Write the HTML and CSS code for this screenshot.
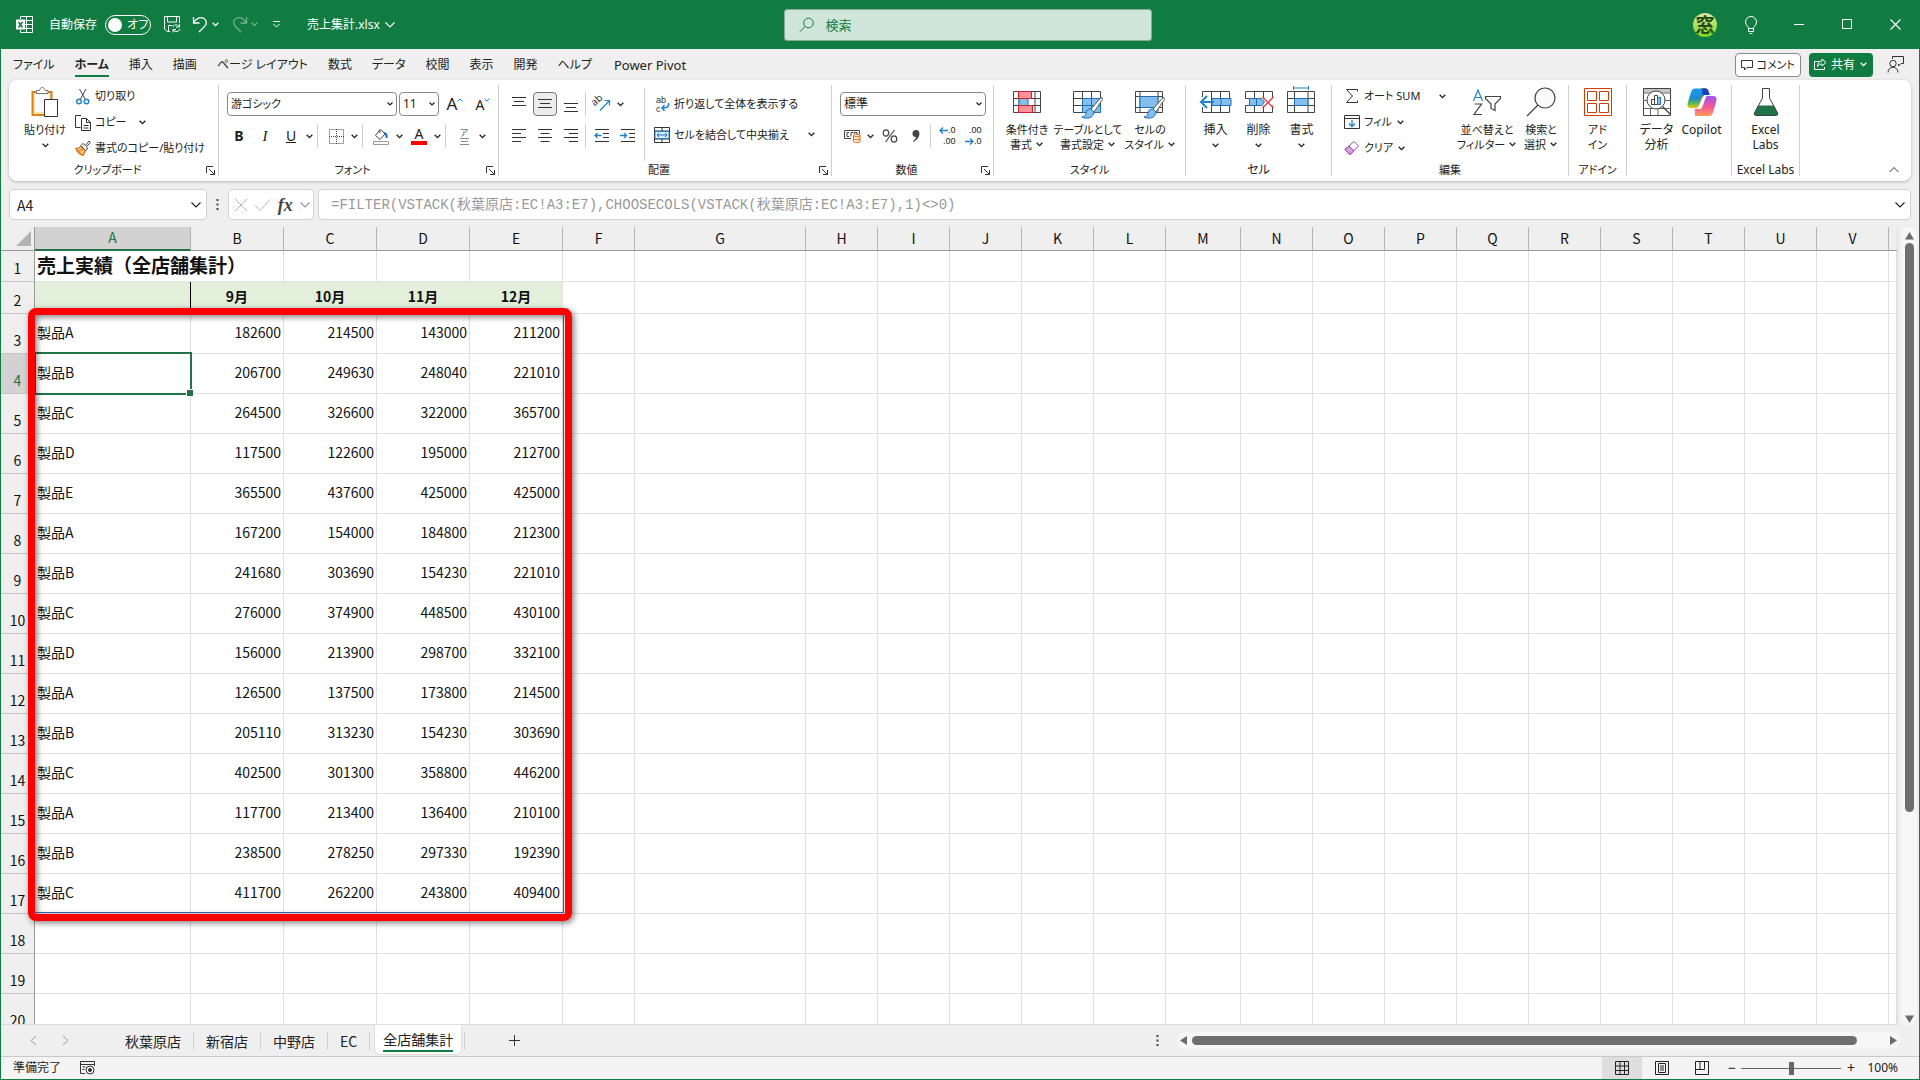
FILE: index.html
```html
<!DOCTYPE html>
<html lang="ja">

<head>
    <meta charset="UTF-8">
    <meta name="viewport" content="width=device-width, initial-scale=1">
    <title>売上集計.xlsx</title>
    <link rel="stylesheet" href="styles.css">
</head>

<body>

    <!-- shared icons -->
    <svg class="defs" width="0" height="0" aria-hidden="true">
        <symbol id="chev" viewBox="0 0 8 8">
            <path d="M1.5 2.5 4 5l2.500-2.500" fill="none" stroke="currentColor" stroke-width="1.200" />
        </symbol>
        <symbol id="chevBig" viewBox="0 0 12 12">
            <path d="M1.500 3.500 6 8l4.500-4.500" fill="none" stroke="currentColor" stroke-width="1.200" />
        </symbol>
        <symbol id="launch" viewBox="0 0 9 9">
            <path d="M.5 7V.5H7M3 3l5 5M8.500 4v4.500H4" fill="none" stroke="#333" />
        </symbol>
        <symbol id="brush" viewBox="0 0 24 24">
            <path d="M22.500 1 12 13l3 3L23.500 3.500z" fill="#fff" stroke="#555" />
            <path d="M12 13c-3-.5-4.500 1-5 4-.4 2.500-1.500 3.500-4 4 5 2.500 11.500 1 12-5z" fill="#83beec" stroke="#1e6fb8" />
        </symbol>
    </svg>

    <header class="titlebar">
        <div class="title-left">
            <svg class="xl" width="17" height="17" viewBox="0 0 17 17">
                <path d="M4.500 3V.5h12v16h-12V14M10.500.5v16M4.500 4.500h12M8 8.500h8.500M4.500 12.500h12" fill="none" stroke="#fff" />
                <rect y="3.500" width="9" height="10" fill="#fff" />
                <path d="m2.500 6 4 5.500M6.500 6l-4 5.500" stroke="#107c41" stroke-width="1.500" />
            </svg>
            <label class="autosave">自動保存
                <input type="checkbox">
                <span class="switch"><span class="knob"></span>オフ</span>
            </label>
            <button class="tb" aria-label="上書き保存">
                <svg width="17" height="17" viewBox="0 0 17 17" fill="none" stroke="#fff">
                    <path d="M6 15.500H3L.5 13V.5h15V7M3.500.5V6h9V.5M4.500 15.500V9.500H8" />
                    <path d="M8.500 11c1-2.500 5-3 6.500-.5M15.500 8v3H12M16 13c-1 3-5 3.500-6.500 1M9 16.500V13.500h3" />
                </svg>
            </button>
            <button class="tb split" aria-label="元に戻す">
                <svg width="17" height="17" viewBox="0 0 17 17" fill="none" stroke="#fff" stroke-width="1.300">
                    <path d="M1.500 1v6h6M1.500 7C4 2 9 .5 12 2.500c3 2 3 5.500.5 8L7 16" />
                </svg>
                <svg width="9" height="9"><use href="#chev" /></svg>
            </button>
            <button class="tb split off" aria-label="やり直し">
                <svg width="17" height="17" viewBox="0 0 17 17" fill="none" stroke="#fff" stroke-width="1.300">
                    <path d="M15.500 1v6h-6M15.500 7C13 2 8 .5 5 2.500c-3 2-3 5.500-.5 8L10 16" />
                </svg>
                <svg width="9" height="9"><use href="#chev" /></svg>
            </button>
            <button class="tb qat" aria-label="クイック アクセス ツール バー">
                <svg width="9" height="9" viewBox="0 0 9 9" fill="none" stroke="#fff">
                    <path d="M1 1.500h7M1.500 4l3 3 3-3" />
                </svg>
            </button>
            <button class="tb file">売上集計.xlsx
                <svg width="12" height="12"><use href="#chevBig" /></svg>
            </button>
        </div>
        <label class="search">
            <svg width="16" height="16" viewBox="0 0 16 16" fill="none" stroke="#107c41">
                <circle cx="9.500" cy="6" r="4.800" />
                <path d="M6 9.500.8 14.800" />
            </svg>
            <input type="text" placeholder="検索" aria-label="検索">
        </label>
        <div class="title-right">
            <button class="avatar" aria-label="アカウント"><span>窓</span></button>
            <button class="win" aria-label="ヒント">
                <svg width="14" height="18" viewBox="0 0 14 18" fill="none" stroke="#fff">
                    <path d="M4.500 12.500C4.500 10 1.500 9.500 1.500 6a5.500 5.500 0 0 1 11 0c0 3.500-3 4-3 6.500zM4.500 12.500v3h5v-3M5.500 17.500h3" />
                </svg>
            </button>
            <button class="win" aria-label="最小化">
                <svg width="11" height="11"><path d="M0 5.500h10" stroke="#fff" /></svg>
            </button>
            <button class="win" aria-label="最大化">
                <svg width="11" height="11"><path d="M.5.5h9v9h-9z" fill="none" stroke="#fff" /></svg>
            </button>
            <button class="win" aria-label="閉じる">
                <svg width="11" height="11"><path d="m.5.5 10 10m0-10-10 10" stroke="#fff" stroke-width="1.200" /></svg>
            </button>
        </div>
    </header>

    <div class="window">

        <nav class="tabs">
            <a href="#">ファイル</a>
            <a href="#" class="current">ホーム</a>
            <a href="#">挿入</a>
            <a href="#">描画</a>
            <a href="#">ページ レイアウト</a>
            <a href="#">数式</a>
            <a href="#">データ</a>
            <a href="#">校閲</a>
            <a href="#">表示</a>
            <a href="#">開発</a>
            <a href="#">ヘルプ</a>
            <a href="#">Power Pivot</a>
            <div class="tabs-right">
                <button class="comment">
                    <svg width="12" height="12" viewBox="0 0 12 12" fill="none" stroke="#333"><path d="M.5 1.500h11v7H6l-2.500 2.500V8.500h-3z" /></svg>
                    コメント
                </button>
                <button class="share">
                    <svg width="13" height="13" viewBox="0 0 13 13" fill="none" stroke="#fff"><path d="M5 3.500H.5v8h10V9M8 1l4 3.500L8 8V6C5.500 6 4.500 7 3.500 8.500 3.500 5.500 5 3 8 3z" /></svg>
                    共有
                    <svg width="9" height="9"><use href="#chev" /></svg>
                </button>
                <button class="person" aria-label="プレゼンス">
                    <svg width="18" height="17" viewBox="0 0 18 17" fill="none" stroke="#333">
                        <path d="M5.500 3V.5h11v7H14L11.500 10V8M1 16.500c0-7 10-7 10 0" />
                        <circle cx="6" cy="7.500" r="3.200" />
                    </svg>
                </button>
            </div>
        </nav>

        <section class="ribbon">

            <div class="group g-clip">
                <div class="group-body">
                    <button class="big paste">
                        <svg width="28" height="31" viewBox="0 0 28 31" fill="none">
                            <path d="M1.500 5h19v23h-19z" fill="#fbe3a8" stroke="#d97f1b" stroke-width="2" />
                            <path d="M4 7h14v18H4z" fill="#fafafa" />
                            <path d="M5.500 6.500v-3h3C9-.5 13.500-.5 14 3.500h3v3z" fill="#fff" stroke="#777" />
                            <path d="M13.500 12.500h13v17h-13z" fill="#fff" stroke="#333" />
                        </svg>
                        <span>貼り付け</span>
                        <svg width="9" height="9"><use href="#chev" /></svg>
                    </button>
                    <div class="stack">
                        <button class="small">
                            <svg width="16" height="17" viewBox="0 0 16 17" fill="none" stroke="#444">
                                <path d="M4.500 1 10 11M11 1 5.500 11" />
                                <circle cx="4" cy="13.500" r="2.300" stroke="#1e83cb" stroke-width="1.400" />
                                <circle cx="11.500" cy="13.500" r="2.300" stroke="#1e83cb" stroke-width="1.400" />
                            </svg>切り取り
                        </button>
                        <button class="small wide">
                            <svg width="16" height="17" viewBox="0 0 16 17" fill="none" stroke="#333">
                                <path d="M5.500 13.500h-5V1.500H6" />
                                <path d="M6.500 4.500h5l4 4v8h-9zM11.500 4.500v4h4M8.500 11.500h5M8.500 14h5" />
                            </svg>コピー
                            <svg class="end" width="9" height="9"><use href="#chev" /></svg>
                        </button>
                        <button class="small">
                            <svg width="16" height="16" viewBox="0 0 16 16" fill="none">
                                <path d="M1 8.500c2 0 4-1 5-2.500l4.500 4.500C9.500 12.500 8.500 14 8 15.500 4.500 14 2 12 1 8.500z" fill="#f9c07a" stroke="#dd6b10" stroke-width="1.300" />
                                <path d="M3 11.500 8 9" stroke="#dd6b10" />
                                <path d="m6 5.500 2-2 2.500 2L14 1l1.500 1.500L11.500 6.500l1 2.500-2 1.500z" fill="#fff" stroke="#444" />
                            </svg>書式のコピー/貼り付け
                        </button>
                    </div>
                </div>
                <div class="group-name"><span>クリップボード</span><button aria-label="詳細"><svg width="9" height="9"><use href="#launch" /></svg></button></div>
            </div>

            <div class="group g-font">
                <div class="group-body rows">
                    <div class="row">
                        <select class="font-name" aria-label="フォント"><option>游ゴシック</option></select>
                        <select class="font-size" aria-label="フォント サイズ"><option>11</option></select>
                        <button class="tool grow" aria-label="拡大"><span>A</span><svg width="6" height="4"><path d="m.5 3.500 2.500-2.500 2.500 2.500" fill="none" stroke="#1e83cb" /></svg></button>
                        <button class="tool shrink" aria-label="縮小"><span>A</span><svg width="6" height="4"><path d="m.5.5 2.500 2.500L5.500.5" fill="none" stroke="#1e83cb" /></svg></button>
                    </div>
                    <div class="row">
                        <button class="tool bold">B</button>
                        <button class="tool italic">I</button>
                        <span class="pair"><button class="tool under">U</button><button class="drop" aria-label="下線"><svg width="9" height="9"><use href="#chev" /></svg></button></span>
                        <i class="sep"></i>
                        <span class="pair"><button class="tool" aria-label="罫線">
                            <svg width="17" height="17" viewBox="0 0 17 17" fill="none" stroke="#444">
                                <path d="M1.500 1.500h14v14h-14zM8.500 1v15M1 8.500h15" stroke-dasharray="1 1" />
                            </svg></button><button class="drop" aria-label="罫線の種類"><svg width="9" height="9"><use href="#chev" /></svg></button></span>
                        <i class="sep"></i>
                        <span class="pair"><button class="tool" aria-label="塗りつぶし">
                            <svg width="16" height="17" viewBox="0 0 16 17" fill="none">
                                <path d="M7 1.500 2.500 7.500 7 11.500l5-5.500-4-4.500M7 1.500V5" stroke="#444" />
                                <path d="M11 5c2 .5 3 2 2.500 5" stroke="#1e6fb8" stroke-width="2" />
                                <path d="M.5 13.500h15v3H.5z" fill="#fff" stroke="#999" />
                            </svg></button><button class="drop" aria-label="塗りつぶしの色"><svg width="9" height="9"><use href="#chev" /></svg></button></span>
                        <span class="pair"><button class="tool color"><span>A</span></button><button class="drop" aria-label="フォントの色"><svg width="9" height="9"><use href="#chev" /></svg></button></span>
                        <i class="sep"></i>
                        <span class="pair"><button class="tool ruby"><span>ア</span><svg width="9" height="7"><path d="M0 .5h9M1 3.500h7M0 6.500h9" stroke="#888" /></svg></button><button class="drop" aria-label="ふりがな"><svg width="9" height="9"><use href="#chev" /></svg></button></span>
                    </div>
                </div>
                <div class="group-name"><span>フォント</span><button aria-label="詳細"><svg width="9" height="9"><use href="#launch" /></svg></button></div>
            </div>

            <div class="group g-align">
                <div class="group-body">
                    <div class="rows">
                        <div class="row">
                            <button class="tool" aria-label="上揃え"><svg width="16" height="16"><path d="M1 1.500h14M3 5.500h10M1 9.500h14" stroke="#333" /></svg></button>
                            <button class="tool on" aria-label="上下中央揃え"><svg width="16" height="16"><path d="M1 3.500h14M3 7.500h10M1 11.500h14" stroke="#333" /></svg></button>
                            <button class="tool" aria-label="下揃え"><svg width="16" height="16"><path d="M1 7.500h14M3 11.500h10M1 15.500h14" stroke="#333" /></svg></button>
                            <i class="sep"></i>
                            <span class="pair"><button class="tool" aria-label="方向">
                                <svg width="18" height="18" viewBox="0 0 18 18">
                                    <text x="1" y="8" font-size="10" fill="#333" transform="rotate(-42 6 9)">ab</text>
                                    <path d="M7 15.500 16 6M11.500 5.500h5v5" fill="none" stroke="#1e83cb" stroke-width="1.200" />
                                </svg></button><button class="drop" aria-label="方向の種類"><svg width="9" height="9"><use href="#chev" /></svg></button></span>
                        </div>
                        <div class="row">
                            <button class="tool" aria-label="左揃え"><svg width="16" height="16"><path d="M1 1.500h14M1 5.500h9M1 9.500h14M1 13.500h9" stroke="#333" /></svg></button>
                            <button class="tool" aria-label="中央揃え"><svg width="16" height="16"><path d="M1 1.500h14M3.500 5.500h9M1 9.500h14M3.500 13.500h9" stroke="#333" /></svg></button>
                            <button class="tool" aria-label="右揃え"><svg width="16" height="16"><path d="M1 1.500h14M6 5.500h9M1 9.500h14M6 13.500h9" stroke="#333" /></svg></button>
                            <i class="sep"></i>
                            <button class="tool" aria-label="インデントを減らす"><svg width="16" height="16" fill="none"><path d="M1 1.500h14M9 5.500h6M9 9.500h6M1 13.500h14" stroke="#333" /><path d="M7.500 7.500H1M3.500 5 1 7.500 3.500 10" stroke="#1e83cb" stroke-width="1.300" /></svg></button>
                            <button class="tool" aria-label="インデントを増やす"><svg width="16" height="16" fill="none"><path d="M1 1.500h14M9 5.500h6M9 9.500h6M1 13.500h14" stroke="#333" /><path d="M0 7.500h6.500M4 5l2.500 2.500L4 10" stroke="#1e83cb" stroke-width="1.300" /></svg></button>
                        </div>
                    </div>
                    <div class="rows wraps">
                        <button class="small">
                            <svg class="abc" width="16" height="16" viewBox="0 0 16 16">
                                <text x="2" y="7">ab</text>
                                <text x="2" y="16">c</text>
                                <path d="M14.500 7c1 4-2 5-6.500 5M10.500 9 8 12l2.500 3" fill="none" stroke="#1e83cb" stroke-width="1.500" />
                            </svg>折り返して全体を表示する
                        </button>
                        <button class="small wide">
                            <svg width="16" height="16" viewBox="0 0 16 16" fill="none">
                                <path d="M.5.500h15v15H.500zM.5 4h15M.5 12h15M8 .500V4M8 12v3.500" stroke="#333" />
                                <path d="M1 4.500h14v7H1z" fill="#dcecf9" stroke="#1e83cb" />
                                <path d="M3 8h10M5 6 3 8l2 2M11 6l2 2-2 2" stroke="#1e6fb8" />
                            </svg>セルを結合して中央揃え
                            <svg class="end" width="9" height="9"><use href="#chev" /></svg>
                        </button>
                    </div>
                </div>
                <div class="group-name"><span>配置</span><button aria-label="詳細"><svg width="9" height="9"><use href="#launch" /></svg></button></div>
            </div>

            <div class="group g-num">
                <div class="group-body rows">
                    <div class="row">
                        <select class="num-format" aria-label="表示形式"><option>標準</option></select>
                    </div>
                    <div class="row">
                        <span class="pair"><button class="tool" aria-label="通貨">
                            <svg width="17" height="15" viewBox="0 0 17 15" fill="none">
                                <path d="M7 9.500H.5v-8h15V5M5 3.500H3v4h2M9 3.500H7v4M10 5V3.500h3V5" stroke="#444" />
                                <path d="M9.500 6.500c0-1.500 6.500-1.500 6.500 0v6c0 1.500-6.500 1.500-6.500 0zM9.500 6.500c0 1.500 6.500 1.500 6.500 0M9.500 9.500c0 1.500 6.500 1.500 6.500 0" fill="#fde3cc" stroke="#dd6b10" />
                            </svg></button><button class="drop" aria-label="通貨の種類"><svg width="9" height="9"><use href="#chev" /></svg></button></span>
                        <button class="tool" aria-label="パーセント"><svg width="16" height="14" viewBox="0 0 16 14" fill="none" stroke="#444" stroke-width="1.200"><ellipse cx="4" cy="4" rx="2.800" ry="3.200" /><ellipse cx="12" cy="10" rx="2.800" ry="3.200" /><path d="M12.500 1 3.500 13" /></svg></button>
                        <button class="tool" aria-label="桁区切り"><svg width="8" height="12" viewBox="0 0 8 12"><path d="M4 0c5 0 5 8-2.500 12l-.5-1c2-1.500 3-3 3-4C-1 7-.5 0 4 0z" fill="#444" /></svg></button>
                        <i class="sep"></i>
                        <button class="tool dec" aria-label="小数点以下の表示桁数を増やす"><span><svg width="9" height="7"><path d="M9 3.500H1M4 .5l-3 3 3 3" fill="none" stroke="#1e83cb" stroke-width="1.300" /></svg>.0</span><span>.00</span></button>
                        <button class="tool dec" aria-label="小数点以下の表示桁数を減らす"><span>.00</span><span><svg width="9" height="7"><path d="M0 3.500h8M5 .5l3 3-3 3" fill="none" stroke="#1e83cb" stroke-width="1.300" /></svg>.0</span></button>
                    </div>
                </div>
                <div class="group-name"><span>数値</span><button aria-label="詳細"><svg width="9" height="9"><use href="#launch" /></svg></button></div>
            </div>

            <div class="group g-style">
                <div class="group-body">
                    <button class="big w60">
                        <svg width="28" height="31" viewBox="0 0 28 31" fill="none">
                            <path d="M.5 4.500h27v21H.5zM6 4.500v21M14 4.500v21M22 4.500v21M.5 11.500h27M.5 18.500h27" stroke="#444" />
                            <path d="M6 11.500h9v7H6z" fill="#83beec" stroke="#1e6fb8" />
                            <path d="M5.500 4.500h13v7h-13zM5.500 18.500h14v7h-14z" fill="#ff9199" stroke="#d6202a" />
                        </svg>
                        <span>条件付き<br>書式<svg width="9" height="9"><use href="#chev" /></svg></span>
                    </button>
                    <button class="big w62">
                        <svg width="31" height="31" viewBox="0 0 31 31" fill="none">
                            <path d="M.5 4.500h27v21H.5zM9.500 4.500v21M18.500 4.500v21M.5 11.500h27M.5 18.500h27" stroke="#444" />
                            <path d="M9.500 11.500h18v14h-18zM18.500 11.500v14M9.500 18.500h18" fill="#83beec" stroke="#1e6fb8" />
                            <use href="#brush" x="6" y="9" width="24" height="24" />
                        </svg>
                        <span>テーブルとして<br>書式設定<svg width="9" height="9"><use href="#chev" /></svg></span>
                    </button>
                    <button class="big w62">
                        <svg width="31" height="31" viewBox="0 0 31 31" fill="none">
                            <path d="M.5 4.500h27v21H.5zM5 4.500v21M23 4.500v21M.5 9.500h27M.5 20.500h27" stroke="#444" />
                            <path d="M5 9.500h18v11H5z" fill="#83beec" stroke="#1e6fb8" />
                            <use href="#brush" x="6" y="9" width="24" height="24" />
                        </svg>
                        <span>セルの<br>スタイル<svg width="9" height="9"><use href="#chev" /></svg></span>
                    </button>
                </div>
                <div class="group-name"><span>スタイル</span></div>
            </div>

            <div class="group g-cell">
                <div class="group-body">
                    <button class="big w43">
                        <svg width="32" height="31" viewBox="0 0 32 31" fill="none">
                            <path d="M2.500 4.500h27v21h-27zM11.500 4.500v21M20.500 4.500v21" stroke="#444" />
                            <path d="M12 11.500h19v7H12zM21 11.500v7" fill="#83beec" stroke="#1e6fb8" />
                            <path d="M0 10h11v10H0z" fill="#fff" />
                            <path d="M14 15H1M7 9l-6 6 6 6" stroke="#1e83cb" stroke-width="2" />
                        </svg>
                        <span>挿入</span>
                        <svg width="9" height="9"><use href="#chev" /></svg>
                    </button>
                    <button class="big w43">
                        <svg width="32" height="31" viewBox="0 0 32 31" fill="none">
                            <path d="M2.500 11.500v-7h27v7M2.500 18.500v7h27v-7M11.500 4.500v7M20.500 4.500v7M11.500 18.500v7M20.500 18.500v7M2.500 11.500h4M2.500 18.500h4" stroke="#444" />
                            <path d="M6.500 11.500h12l3 3.500-3 3.500h-12zM13.500 11.500v7" fill="#83beec" stroke="#1e6fb8" />
                            <path d="m19.500 10 11 11m0-11-11 11" stroke="#e8424b" stroke-width="1.500" />
                        </svg>
                        <span>削除</span>
                        <svg width="9" height="9"><use href="#chev" /></svg>
                    </button>
                    <button class="big w43">
                        <svg width="29" height="31" viewBox="0 0 29 31" fill="none">
                            <path d="M.5 4.500h27v21H.5zM7.500 4.500v21M21 4.500v21M.5 11.500h27M.5 18.500h27" stroke="#444" />
                            <path d="M7.500 11.500H21v7H7.500z" fill="#83beec" stroke="#1e6fb8" />
                            <path d="M7 1h14M6.500-1v4M21.500-1v4" stroke="#1e83cb" />
                        </svg>
                        <span>書式</span>
                        <svg width="9" height="9"><use href="#chev" /></svg>
                    </button>
                </div>
                <div class="group-name"><span>セル</span></div>
            </div>

            <div class="group g-edit">
                <div class="group-body">
                    <div class="stack">
                        <button class="small wide">
                            <svg width="16" height="16" viewBox="0 0 16 16" fill="none"><path d="M13.500 3.500v-2h-11L8.500 8l-6 6.500h11v-2" stroke="#333" /></svg>オート SUM
                            <svg class="end" width="9" height="9"><use href="#chev" /></svg>
                        </button>
                        <button class="small">
                            <svg width="16" height="16" viewBox="0 0 16 16" fill="none"><path d="M.5 1.500h15v13H.5zM.5 4.500h15" stroke="#333" /><path d="M8 6v6.500M5 9.500l3 3 3-3" stroke="#1e83cb" stroke-width="1.300" /></svg>フィル
                            <svg width="9" height="9"><use href="#chev" /></svg>
                        </button>
                        <button class="small">
                            <svg width="16" height="16" viewBox="0 0 16 16" fill="none"><path d="M10 1.500 14.500 6 6 14.500 1 9.500z" stroke="#9b3fa8" /><path d="m5 6 5 5-4 3.500-5-5z" fill="#d9a3e0" stroke="#9b3fa8" /></svg>クリア
                            <svg width="9" height="9"><use href="#chev" /></svg>
                        </button>
                    </div>
                    <button class="big w54">
                        <svg width="30" height="31" viewBox="0 0 30 31" fill="none" stroke-width="1.200">
                            <path d="M1.500 14 6 3l4.500 11M3 10.500h6" stroke="#1e83cb" />
                            <path d="M2.500 17h7L2 27.500h8" stroke="#444" />
                            <path d="M13.500 9.500h15v2L23 17v6.500l-4-2V17l-5.500-5.500z" stroke="#444" />
                        </svg>
                        <span>並べ替えと<br>フィルター<svg width="9" height="9"><use href="#chev" /></svg></span>
                    </button>
                    <button class="big w54">
                        <svg width="31" height="31" viewBox="0 0 31 31" fill="none" stroke="#444" stroke-width="1.200"><circle cx="19" cy="11" r="10" fill="#fafafa" /><path d="M12 18 1 29" /></svg>
                        <span>検索と<br>選択<svg width="9" height="9"><use href="#chev" /></svg></span>
                    </button>
                </div>
                <div class="group-name"><span>編集</span></div>
            </div>

            <div class="group g-addin">
                <div class="group-body">
                    <button class="big w54">
                        <svg width="28" height="31" viewBox="0 0 28 31" fill="none" stroke="#d83b01"><path d="M.5 1.500h27v27H.5zM3.500 4.500h9v9h-9zM15.500 4.500h9v9h-9zM3.500 16.500h9v9h-9zM15.500 16.500h9v9h-9z" /></svg>
                        <span>アド<br>イン</span>
                    </button>
                </div>
                <div class="group-name"><span>アドイン</span></div>
            </div>

            <div class="group g-data">
                <div class="group-body">
                    <button class="big w45">
                        <svg width="28" height="31" viewBox="0 0 28 31" fill="none">
                            <path d="M.5 1.500h27v27H.5z" stroke="#444" />
                            <path d="M1 2h26v3.500H1z" fill="#c8c6c4" />
                            <path d="M.5 6h27M.5 13.500h27M.5 21.500h27M7.500 21v7M15 21v7" stroke="#666" />
                            <circle cx="13" cy="13" r="9" fill="#fff" stroke="#444" />
                            <path d="m19.500 19.500 8 8" stroke="#444" stroke-width="1.500" />
                            <path d="M8.500 12.500h3v5h-3zM11.500 8.500h3v9h-3z" fill="#fff" stroke="#444" />
                            <path d="M14.500 10.500h3v7h-3z" fill="#83beec" stroke="#1e6fb8" />
                        </svg>
                        <span>データ<br>分析</span>
                    </button>
                    <button class="big w45">
                        <svg width="30" height="31" viewBox="0 0 30 31">
                            <defs>
                                <linearGradient id="cpA" x1="0" y1="0" x2="0" y2="1"><stop offset="0" stop-color="#1b9af0" /><stop offset=".5" stop-color="#1d8bd0" /><stop offset=".75" stop-color="#55b85a" /><stop offset="1" stop-color="#f0c808" /></linearGradient>
                                <linearGradient id="cpB" x1="0" y1="0" x2="0" y2="1"><stop offset="0" stop-color="#9a55f5" /><stop offset=".5" stop-color="#f0559a" /><stop offset="1" stop-color="#ff9a5c" /></linearGradient>
                            </defs>
                            <path d="M14 1h4c2 0 3 1 3.500 3L23 8h-6L8 26c-1 3 1 3 2 3h5l4-3-9-1z" fill="#f58a3c" />
                            <path d="M8 1.500h10c2 0 3 1 3.500 3L22.500 8h-5c-2 0-2.500 1-3.200 3l-2.800 8c-.6 2-1.500 2-3 2H4c-4 0-4-3-3-6L4 5c1-2.500 2-3.500 4-3.500z" fill="url(#cpA)" />
                            <path d="M15 1.500h3c2 0 3 1 3.500 3L22.500 8h-5c-1 0-1.500.5-2 1z" fill="#1746b8" />
                            <path d="M22 29H12c-2 0-3-1-3.500-3L7.500 22h5c2 0 2.500-1 3.200-3l2.800-8c.6-2 1.500-2 3-2H26c4 0 4 3 3 6l-3 10.500c-1 2.500-2 3.500-4 3.500z" fill="url(#cpB)" />
                        </svg>
                        <span>Copilot</span>
                    </button>
                </div>
                <div class="group-name"></div>
            </div>

            <div class="group g-labs">
                <div class="group-body">
                    <button class="big w54">
                        <svg width="26" height="31" viewBox="0 0 26 31" fill="none"><path d="M5 18.500h16l4 8c.5 1-.5 2-1.500 2h-21c-1 0-2-1-1.500-2z" fill="#1f7246" /><path d="M9.500 1.500h7V11l8 15c.7 1.500-.5 2.500-1.500 2.500H3C2 28.500.8 27.500 1.500 26l8-15z" stroke="#444" /></svg>
                        <span>Excel<br>Labs</span>
                    </button>
                </div>
                <div class="group-name"><span>Excel Labs</span></div>
            </div>

            <button class="collapse" aria-label="リボンを折りたたむ"><svg width="12" height="12" viewBox="0 0 12 12"><path d="m1.500 8 4.500-4.500L10.500 8" fill="none" stroke="#333" /></svg></button>
        </section>

        <div class="formula-row">
            <div class="box name-box">
                <input type="text" value="A4" aria-label="名前ボックス">
                <svg width="12" height="12"><use href="#chevBig" /></svg>
            </div>
            <svg class="dots" width="3" height="13"><path d="M.5 1h2v2h-2zM.5 5.500h2v2h-2zM.5 10h2v2h-2z" fill="#444" /></svg>
            <div class="box fx-box">
                <button aria-label="キャンセル"><svg width="14" height="14"><path d="m1 1 12 12m0-12L1 13" stroke="#b4b4b4" /></svg></button>
                <button aria-label="入力"><svg width="17" height="14"><path d="m1 7.500 5 5L16 1.500" fill="none" stroke="#b4b4b4" /></svg></button>
                <button class="fx">fx</button>
                <svg width="12" height="12"><use href="#chevBig" /></svg>
            </div>
            <div class="box formula-box">
                <input type="text" value="=FILTER(VSTACK(秋葉原店:EC!A3:E7),CHOOSECOLS(VSTACK(秋葉原店:EC!A3:E7),1)&lt;&gt;0)" aria-label="数式バー">
                <svg width="12" height="12"><use href="#chevBig" /></svg>
            </div>
        </div>

        <main class="sheet-area">
            <div class="sheet">
                <table id="grid">
                    <colgroup></colgroup>
                    <thead></thead>
                    <tbody></tbody>
                </table>
                <div class="marker"></div>
            </div>
            <div class="vscroll">
                <svg width="9" height="8"><path d="M4.500 0 9 7.500H0z" fill="#6b6b6b" /></svg>
                <div class="vtrack"><div class="vthumb"></div></div>
                <svg width="9" height="8"><path d="M4.500 8 9 .5H0z" fill="#6b6b6b" /></svg>
            </div>
        </main>

        <div class="sheet-tabs">
            <button class="arrow" aria-label="前へ"><svg width="7" height="11"><path d="m6 1-5 4.500L6 10" fill="none" stroke="#999" /></svg></button>
            <button class="arrow" aria-label="次へ"><svg width="7" height="11"><path d="m1 1 5 4.500L1 10" fill="none" stroke="#999" /></svg></button>
            <div class="tab-list">
                <button>秋葉原店</button>
                <button>新宿店</button>
                <button>中野店</button>
                <button>EC</button>
                <button class="active"><span>全店舗集計</span></button>
            </div>
            <button class="add" aria-label="新しいシート"><svg width="11" height="11"><path d="M5.500 0v11M0 5.500h11" stroke="#333" /></svg></button>
            <svg class="grip" width="3" height="13"><path d="M.5 1h2v2h-2zM.5 5.500h2v2h-2zM.5 10h2v2h-2z" fill="#444" /></svg>
            <div class="hscroll">
                <svg width="8" height="9"><path d="M0 4.500 7 0v9z" fill="#6b6b6b" /></svg>
                <div class="htrack"><div class="hthumb"></div></div>
                <svg width="8" height="9"><path d="M8 4.500 1 0v9z" fill="#6b6b6b" /></svg>
            </div>
        </div>

        <footer class="status">
            <span>準備完了</span>
            <svg width="15" height="14" viewBox="0 0 15 14" fill="none" stroke="#333"><path d="M5 12.500H.5v-12h14V5M.5 3.500h14M2.500 6h3M2.500 8.500h2" /><circle cx="10" cy="9" r="4" /><circle cx="10" cy="9" r="1.500" fill="#333" /></svg>
            <div class="views">
                <button class="on" aria-label="標準"><svg width="14" height="14"><path d="M.5.500h13v13H.500zM5 .5v13M9.500.5v13M.5 5h13M.5 9.500h13" fill="none" stroke="#222" /></svg></button>
                <button aria-label="ページ レイアウト"><svg width="14" height="14"><path d="M.5.500h13v13H.500zM3.500 2.500h7v9h-7zM5 5h4M5 7h4M5 9h4" fill="none" stroke="#222" /></svg></button>
                <button aria-label="改ページ プレビュー"><svg width="14" height="14"><path d="M.5.500h13v13H.500zM5 .5v8M9.500.5v8h-9" fill="none" stroke="#222" /></svg></button>
                <span class="zoom-sign">−</span>
                <input type="range" min="0" max="100" value="50" aria-label="ズーム">
                <span class="zoom-sign">+</span>
                <span class="percent">100%</span>
            </div>
        </footer>
    </div>

    <script src="script.js"></script>
</body>

</html>
```
FILE: styles.css
```css
* {
    box-sizing: border-box;
}

body {
    margin: 0;
    height: 100vh;
    display: flex;
    flex-direction: column;
    overflow: hidden;
    background: #107c41;
    color: #222;
    font-family: "Noto Sans", "Noto Sans CJK JP", sans-serif;
    font-size: 12px;
    line-height: 16px;
    font-feature-settings: "palt";
}

button,
input,
select {
    font: inherit;
    font-feature-settings: inherit;
    color: inherit;
    border: 0;
    padding: 0;
    background: none;
    outline: none;
}

button,
label {
    display: flex;
    align-items: center;
    white-space: nowrap;
}

svg {
    display: block;
    flex: none;
    overflow: visible;
}

.defs {
    position: absolute;
}

/* Title bar */
.titlebar {
    height: 49px;
    flex: none;
    display: flex;
    align-items: center;
    color: #fff;
    padding: 0 1px 8px 16px;
}

.title-left,
.title-right {
    flex: 1;
    display: flex;
    align-items: center;
    height: 41px;
    padding-top: 8px;
}

.autosave {
    margin-left: 16px;
    gap: 8px;
}

.autosave input {
    position: absolute;
    opacity: 0;
}

.switch {
    display: flex;
    align-items: center;
    gap: 5px;
    width: 46px;
    height: 20px;
    padding-left: 2px;
    border: 1px solid #fff;
    border-radius: 10px;
}

.knob {
    width: 14px;
    height: 14px;
    border-radius: 50%;
    background: #fff;
}

.tb {
    margin-left: 13px;
}

.split {
    gap: 2px;
    margin-left: 11px;
}

.file {
    margin-left: 26px;
    gap: 4px;
}

.search {
    width: 368px;
    height: 32px;
    margin-top: 9px;
    padding: 0 14px;
    gap: 11px;
    background: #cfe5d9;
    border: 1px solid #8aa898;
    border-radius: 3px;
    color: #107c41;
}

.off {
    opacity: .4;
}

.search input {
    flex: 1;
    font-size: 13px;
}

.search input::placeholder {
    color: #107c41;
    opacity: 1;
}

.title-right {
    justify-content: flex-end;
}

.avatar {
    margin-right: 10px;
}

.avatar span {
    width: 24px;
    height: 24px;
    line-height: 24px;
    border-radius: 50%;
    text-align: center;
    font-size: 19px;
    font-weight: bold;
    background: linear-gradient(#dfe8a0, #7ed321);
    color: #1f4a17;
}

.win {
    width: 48px;
    height: 32px;
    justify-content: center;
}

.window {
    flex: 1;
    min-height: 0;
    display: flex;
    flex-direction: column;
    margin: 0 1px 1px;
    background: #efefef;
}

/* Ribbon tabs */
.tabs {
    display: flex;
    align-items: center;
    gap: 20px;
    height: 31px;
    flex: none;
    padding-left: 12px;
}

.tabs a {
    color: #222;
    text-decoration: none;
    border-bottom: 2px solid transparent;
    line-height: 20px;
    margin-top: 3px;
    white-space: nowrap;
}

.tabs a.current {
    font-weight: bold;
    border-color: #107c41;
}

.tabs a:last-of-type {
    margin-left: 2px;
    font-size: 13px;
}

.tabs-right {
    display: flex;
    gap: 8px;
    margin-left: auto;
}

.comment,
.share {
    height: 24px;
    gap: 4px;
    padding: 0 5px;
    border-radius: 4px;
}

.comment {
    background: #fff;
    border: 1px solid #888;
    font-size: 11px;
}

.share {
    background: #107c41;
    color: #fff;
}

.person {
    width: 46px;
    margin-left: -8px;
    justify-content: center;
}

/* Ribbon */
.ribbon {
    display: flex;
    flex: none;
    height: 101px;
    margin: 0 8px;
    background: #fff;
    border-radius: 8px;
    box-shadow: 0 1px 3px rgba(0, 0, 0, .25);
    padding: 5px 0;
}

.group {
    display: flex;
    flex-direction: column;
    flex: none;
    border-right: 1px solid #d0d0d0;
    font-size: 11px;
}

.g-clip { width: 210px; }
.g-font { width: 280px; }
.g-align { width: 333px; }
.g-num { width: 162px; }
.g-style { width: 192px; }
.g-cell { width: 146px; }
.g-edit { width: 237px; }
.g-addin { width: 58px; }
.g-data { width: 105px; }
.g-labs { width: 68px; }

.g-cell,
.g-data,
.g-labs {
    font-size: 12px;
}

.group-body {
    display: flex;
    flex: 1;
    min-height: 0;
}

.group-name {
    display: flex;
    justify-content: center;
    align-items: center;
    height: 12px;
    line-height: 12px;
    flex: none;
    white-space: nowrap;
}

.group-name button {
    margin-right: 3px;
}

.group-name span {
    flex: 1;
    text-align: center;
}

.rows {
    display: flex;
    flex-direction: column;
    padding-top: 3px;
}

.row {
    display: flex;
    align-items: center;
    gap: 2px;
    height: 32px;
}

.pair {
    display: flex;
}

.sep {
    width: 3px;
    height: 24px;
    border-left: 1px solid #d0d0d0;
}

.g-font .sep {
    width: 5px;
}

.tool {
    width: 24px;
    height: 24px;
    justify-content: center;
    font-size: 14px;
}

.tool.on {
    background: #ececec;
    border: 1px solid #777;
    border-radius: 4px;
}

.drop {
    width: 12px;
    justify-content: center;
}

.bold {
    font-weight: bold;
}

.italic {
    font-family: "Liberation Serif", serif;
    font-style: italic;
    font-size: 15px;
}

.under {
    text-decoration: underline;
}

.grow,
.shrink {
    align-items: flex-start;
}

.grow span {
    font-size: 17px;
    line-height: 24px;
}

.shrink span {
    line-height: 26px;
}

.grow svg,
.shrink svg {
    margin-top: 6px;
}

.color span {
    width: 16px;
    height: 18px;
    line-height: 14px;
    border-bottom: 4px solid #f00;
}

.ruby {
    flex-direction: column;
    gap: 1px;
    color: #666;
}

.ruby span {
    font-family: "Noto Sans CJK JP", sans-serif;
    font-size: 9px;
    line-height: 9px;
}

.dec {
    flex-direction: column;
    font-family: "Liberation Sans", sans-serif;
    font-size: 9px;
    line-height: 11px;
}

.dec span {
    display: flex;
    align-items: center;
    width: 17px;
    justify-content: flex-end;
}

.abc {
    font-family: "Liberation Sans", sans-serif;
    font-size: 9px;
    fill: #333;
}

select {
    appearance: none;
    height: 24px;
    padding-left: 3px;
    border: 1px solid #888;
    border-radius: 4px;
    font-size: 12px;
    background: #fff url("data:image/svg+xml,%3Csvg xmlns='http://www.w3.org/2000/svg' width='8' height='8'%3E%3Cpath d='M1.500 2.500 4 5l2.500-2.500' fill='none' stroke='%23222' stroke-width='1.200'/%3E%3C/svg%3E") no-repeat right 2px center;
}

.font-name {
    width: 170px;
    font-size: 11px;
}

.font-size { width: 40px; }
.num-format { width: 146px; }

.grow,
.shrink {
    margin-left: 2px;
}

.g-font .rows,
.g-num .rows,
.g-align .rows {
    padding-left: 8px;
}

.g-align .wraps {
    margin: 3px 0 3px 4px;
    padding: 0 0 0 9px;
    border-left: 1px solid #d0d0d0;
}

.wraps .small {
    height: 31px;
}

.wraps .wide {
    width: 162px;
}

.small {
    gap: 4px;
    height: 26px;
}

.small .end {
    margin-left: auto;
}

.stack {
    display: flex;
    flex-direction: column;
    margin-top: -2px;
}

.g-clip .wide {
    width: 72px;
}

.g-edit .stack {
    width: 128px;
    padding-left: 12px;
}

.g-edit .wide {
    width: 103px;
}

.big {
    flex-direction: column;
    line-height: 15px;
    text-align: center;
    padding-top: 2px;
    gap: 4px;
}

.big span svg {
    display: inline-block;
    margin-left: 3px;
}

.paste {
    width: 60px;
    margin-left: 6px;
}

.w60 { width: 60px; }
.w62 { width: 62px; }
.w54 { width: 54px; }
.w45 { width: 45px; }
.w43 { width: 43px; }

.g-style .group-body { padding-left: 3px; }
.g-cell .group-body { padding-left: 8px; }
.g-data .group-body { padding-left: 7px; }

.g-addin .group-body,
.g-labs .group-body {
    justify-content: center;
}

.collapse {
    margin: auto 11px 0 auto;
    height: 12px;
}

/* Formula bar */
.formula-row {
    display: flex;
    align-items: center;
    height: 46px;
    flex: none;
    padding: 1px 8px 0;
}

.box {
    display: flex;
    align-items: center;
    height: 31px;
    background: #fff;
    border: 1px solid #d2d2d2;
    border-radius: 4px;
    padding-right: 4px;
}

.name-box {
    width: 198px;
    padding-left: 7px;
}

.name-box input {
    flex: 1;
    min-width: 0;
    font-size: 14px;
    font-family: "Noto Sans CJK JP", sans-serif;
}

.dots {
    margin: 0 9px;
}

.fx-box {
    width: 86px;
    padding: 0 2px 0 5px;
    justify-content: space-between;
    color: #999;
}

.fx {
    font-family: "Liberation Serif", serif;
    font-style: italic;
    font-weight: bold;
    font-size: 18px;
    color: #444;
}

.formula-box {
    flex: 1;
    margin-left: 4px;
    padding-left: 12px;
}

.formula-box input {
    flex: 1;
    font-family: "Liberation Mono", "Noto Sans CJK JP", monospace;
    font-size: 14px;
    color: #999;
}

/* Sheet */
.sheet-area {
    flex: 1;
    min-height: 0;
    display: flex;
}

.sheet {
    position: relative;
    flex: 1;
    overflow: hidden;
    border-bottom: 1px solid #ddd;
    border-right: 1px solid #ddd;
}

table {
    table-layout: fixed;
    width: 100%;
    border-collapse: separate;
    border-spacing: 0;
    font-family: "Noto Sans CJK JP", sans-serif;
    font-feature-settings: normal;
    font-size: 14px;
    line-height: 20px;
    color: #111;
    background: #fff;
}

th {
    font-weight: normal;
    padding: 0;
    background: #efefef;
}

thead th {
    height: 24px;
    padding-bottom: 2px;
    border-right: 1px solid #b5b5b5;
    border-bottom: 1px solid #999;
}

thead th:last-child {
    border-right: 0;
}

thead th.sel {
    background: #d2d2d2;
    color: #217346;
    border-bottom: 2px solid #217346;
}

thead th.corner {
    border-right-color: #999;
}

.corner svg {
    margin: 2px 0 0 15px;
}

tbody th {
    vertical-align: bottom;
    padding-bottom: 3px;
    border-right: 1px solid #999;
    border-bottom: 1px solid #c4c4c4;
}

tbody th.sel {
    background: #d2d2d2;
    color: #217346;
}

td {
    height: 40px;
    padding: 0 2px 3px;
    border-right: 1px solid #e0e0e0;
    border-bottom: 1px solid #e0e0e0;
    white-space: nowrap;
}

.title-row td { height: 31px; }
.head-row td { height: 32px; }

.title-row td:nth-child(2) {
    font-size: 19px;
    font-weight: bold;
    border-right-color: transparent;
}

.head-row td.fill {
    background: #e2efda;
    border-color: #e2efda;
    text-align: center;
    font-weight: bold;
}

.head-row td.fill:nth-child(2) {
    border-right-color: #000;
}

.num {
    text-align: right;
}

.cursor {
    position: relative;
}

.cursor:after {
    content: "";
    position: absolute;
    inset: -2px -2px -2px -1px;
    border: 2px solid #217346;
}

.cursor:before {
    content: "";
    position: absolute;
    z-index: 1;
    right: -3px;
    bottom: -3px;
    width: 6px;
    height: 6px;
    background: #217346;
    border: solid #fff;
    border-width: 1px 0 0 1px;
}

/* red frame round the spilled range */
.marker {
    position: absolute;
    left: 27px;
    top: 81px;
    width: 544px;
    height: 613px;
    border: 7px solid #f00;
    border-radius: 8px;
    box-shadow: 2px 2px 6px rgba(0, 0, 0, .5), inset 2px 2px 6px rgba(0, 0, 0, .5);
}

.marker:after {
    content: "";
    position: absolute;
    inset: 0 1px 1px 0;
    border: solid #3b5ba5;
    border-width: 0 1px 1px 0;
}

.vscroll {
    display: flex;
    flex-direction: column;
    align-items: center;
    gap: 3px;
    width: 16px;
    margin: 0 2px 0 3px;
    padding: 5px 0 2px;
    background: #f6f6f6;
    border-radius: 8px;
}

.vtrack {
    flex: 1;
}

.vthumb {
    width: 9px;
    height: 74%;
    background: #6f6f6f;
    border-radius: 5px;
}

/* Sheet tabs */
.sheet-tabs {
    display: flex;
    align-items: center;
    height: 32px;
    flex: none;
    border-bottom: 1px solid #c8c8c8;
    font-family: "Noto Sans CJK JP", sans-serif;
    font-feature-settings: normal;
    font-size: 14px;
    padding-left: 16px;
}

.arrow {
    width: 32px;
    justify-content: center;
}

.tab-list {
    display: flex;
    align-items: center;
    height: 100%;
    margin-left: 32px;
}

.tab-list button {
    height: 18px;
    padding: 0 12px;
    border-right: 1px solid #d0d0d0;
}

.tab-list .active {
    height: 29px;
    align-self: flex-start;
    margin: 0 3px 0 5px;
    padding: 0 8px;
    background: #fff;
    border: 0;
    border-radius: 0 0 5px 5px;
    box-shadow: 0 0 1px 1px #ddd;
    clip-path: inset(0 -2px -2px);
}

.active span {
    line-height: 22px;
    border-bottom: 2px solid #107c41;
}

.add {
    padding-left: 44px;
    border-left: 1px solid #d0d0d0;
    height: 18px;
}

.grip {
    margin-left: auto;
}

.hscroll {
    display: flex;
    align-items: center;
    gap: 4px;
    width: 38%;
    height: 17px;
    margin: 0 19px 0 18px;
    padding: 0 3px;
    background: #f6f6f6;
    border-radius: 8px;
}

.htrack {
    flex: 1;
}

.hthumb {
    width: 96%;
    height: 9px;
    background: #6f6f6f;
    border-radius: 5px;
}

/* Status bar */
.status {
    display: flex;
    align-items: center;
    gap: 19px;
    height: 22px;
    flex: none;
    background: #f4f4f4;
    padding-left: 12px;
}

.views {
    display: flex;
    align-items: center;
    height: 100%;
    margin-left: auto;
    padding-right: 21px;
}

.views button {
    width: 40px;
    height: 100%;
    justify-content: center;
}

.views button.on {
    background: #dedede;
}

.zoom-sign {
    width: 19px;
    text-align: center;
    font-size: 14px;
}

.views input {
    appearance: none;
    width: 100px;
    height: 17px;
    margin: 0;
    background: linear-gradient(#666, #666) center / 100% 1px no-repeat;
}

.views input::-webkit-slider-thumb {
    appearance: none;
    width: 5px;
    height: 13px;
    background: #666;
}

.percent {
    margin-left: 7px;
}
```
FILE: script.js
```js
var names = "ABCDEFGHIJKLMNOPQRSTUV".split("");
var widths = [156, 93, 93, 93, 93, 72, 171, 72, 72, 72, 72, 72, 75, 72, 72, 72, 72, 72, 72, 72, 72, 72];

var rows = {
    1: ["売上実績（全店舗集計）"],
    2: ["", "9月", "10月", "11月", "12月"],
    3: ["製品A", 182600, 214500, 143000, 211200],
    4: ["製品B", 206700, 249630, 248040, 221010],
    5: ["製品C", 264500, 326600, 322000, 365700],
    6: ["製品D", 117500, 122600, 195000, 212700],
    7: ["製品E", 365500, 437600, 425000, 425000],
    8: ["製品A", 167200, 154000, 184800, 212300],
    9: ["製品B", 241680, 303690, 154230, 221010],
    10: ["製品C", 276000, 374900, 448500, 430100],
    11: ["製品D", 156000, 213900, 298700, 332100],
    12: ["製品A", 126500, 137500, 173800, 214500],
    13: ["製品B", 205110, 313230, 154230, 303690],
    14: ["製品C", 402500, 301300, 358800, 446200],
    15: ["製品A", 117700, 213400, 136400, 210100],
    16: ["製品B", 238500, 278250, 297330, 192390],
    17: ["製品C", 411700, 262200, 243800, 409400]
};

var grid = document.getElementById("grid");

// columns, the last one takes what is left
var cols = '<col width="34">';
var head = '<tr><th class="corner"><svg width="16" height="16"><path d="M15 0v15H0z" fill="#b3b3b3"/></svg></th>';
for (let i = 0; i < names.length; i++) {
    cols += '<col width="' + widths[i] + '">';
    head += '<th' + (i == 0 ? ' class="sel"' : '') + '>' + names[i] + '</th>';
}
grid.querySelector("colgroup").innerHTML = cols + "<col>";
grid.querySelector("thead").innerHTML = head + "<th></th></tr>";

var body = "";
for (let r = 1; r <= 20; r++) {
    const data = rows[r] || [];
    const rowClass = r == 1 ? ' class="title-row"' : r == 2 ? ' class="head-row"' : '';
    body += '<tr' + rowClass + '><th' + (r == 4 ? ' class="sel"' : '') + '>' + r + '</th>';
    for (let c = 0; c <= names.length; c++) {
        const value = data[c] === undefined ? "" : data[c];
        let cls = "";
        if (r == 2 && c < 5) cls = "fill";
        if (typeof value == "number") cls = "num";
        if (r == 4 && c == 0) cls = "cursor";
        body += '<td' + (cls ? ' class="' + cls + '"' : '') + '>' + value + '</td>';
    }
    body += "</tr>";
}
grid.querySelector("tbody").innerHTML = body;
```
